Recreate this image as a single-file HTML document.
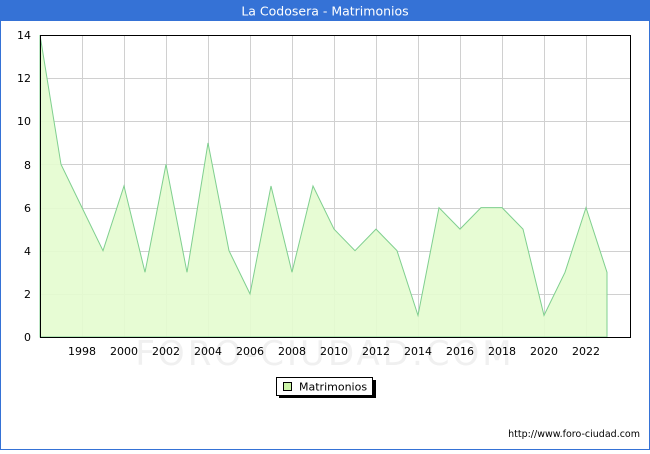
<!DOCTYPE html>
<html><head><meta charset="utf-8"><style>
html,body{margin:0;padding:0;background:#fff;}
body{width:650px;height:450px;overflow:hidden;font-family:"DejaVu Sans","Liberation Sans",sans-serif;}
</style></head><body>
<svg width="650" height="450" xmlns="http://www.w3.org/2000/svg" font-family="DejaVu Sans, Liberation Sans, sans-serif">
<rect x="0.5" y="0.5" width="649" height="449" fill="#fff" stroke="#3572d6"/>
<rect x="0" y="0" width="650" height="21" fill="#3572d6"/>
<text x="325" y="15.5" fill="#fff" font-size="12.5" text-anchor="middle">La Codosera - Matrimonios</text>
<g stroke="#d0d0d0" stroke-width="1">
<line x1="40" y1="294.5" x2="630" y2="294.5"/>
<line x1="40" y1="251.5" x2="630" y2="251.5"/>
<line x1="40" y1="208.5" x2="630" y2="208.5"/>
<line x1="40" y1="164.5" x2="630" y2="164.5"/>
<line x1="40" y1="121.5" x2="630" y2="121.5"/>
<line x1="40" y1="78.5" x2="630" y2="78.5"/>
<line x1="82.5" y1="35" x2="82.5" y2="337"/>
<line x1="124.5" y1="35" x2="124.5" y2="337"/>
<line x1="166.5" y1="35" x2="166.5" y2="337"/>
<line x1="208.5" y1="35" x2="208.5" y2="337"/>
<line x1="250.5" y1="35" x2="250.5" y2="337"/>
<line x1="292.5" y1="35" x2="292.5" y2="337"/>
<line x1="334.5" y1="35" x2="334.5" y2="337"/>
<line x1="376.5" y1="35" x2="376.5" y2="337"/>
<line x1="418.5" y1="35" x2="418.5" y2="337"/>
<line x1="460.5" y1="35" x2="460.5" y2="337"/>
<line x1="502.5" y1="35" x2="502.5" y2="337"/>
<line x1="544.5" y1="35" x2="544.5" y2="337"/>
<line x1="586.5" y1="35" x2="586.5" y2="337"/>
</g>
<text x="325" y="365" fill="#f0f0f0" font-size="34" text-anchor="middle" letter-spacing="3">FORO-CIUDAD.COM</text>
<polygon fill="#e4fccf" fill-opacity="0.9" stroke="#7fcf8f" stroke-width="1" points="40,337 40,35 61,164.4 82,207.6 103,250.7 124,186 145,272.3 166,164.4 187,272.3 208,142.9 229,250.7 250,293.9 271,186 292,272.3 313,186 334,229.1 355,250.7 376,229.1 397,250.7 418,315.4 439,207.6 460,229.1 481,207.6 502,207.6 523,229.1 544,315.4 565,272.3 586,207.6 607,272.3 607,337"/>
<rect x="40.5" y="35.5" width="590" height="302" fill="none" stroke="#000"/>
<g font-size="11" fill="#000" text-anchor="end">
<text x="31" y="341">0</text><text x="31" y="298">2</text><text x="31" y="255">4</text><text x="31" y="212">6</text><text x="31" y="169">8</text><text x="31" y="125">10</text><text x="31" y="82">12</text><text x="31" y="39">14</text>
</g>
<g font-size="11" fill="#000" text-anchor="middle">
<text x="82" y="355">1998</text><text x="124" y="355">2000</text><text x="166" y="355">2002</text><text x="208" y="355">2004</text><text x="250" y="355">2006</text><text x="292" y="355">2008</text><text x="334" y="355">2010</text><text x="376" y="355">2012</text><text x="418" y="355">2014</text><text x="460" y="355">2016</text><text x="502" y="355">2018</text><text x="544" y="355">2020</text><text x="586" y="355">2022</text>
</g>
<rect x="279" y="380" width="97" height="18" fill="#000"/>
<rect x="276.5" y="377.5" width="96" height="18" fill="#fff" stroke="#000"/>
<rect x="283.5" y="382.5" width="8" height="8" fill="#ccf5a8" stroke="#000"/>
<text x="299" y="390.5" font-size="11" fill="#000">Matrimonios</text>
<text x="640" y="437" font-size="9.5" fill="#000" text-anchor="end">http://www.foro-ciudad.com</text>
</svg>
</body></html>
